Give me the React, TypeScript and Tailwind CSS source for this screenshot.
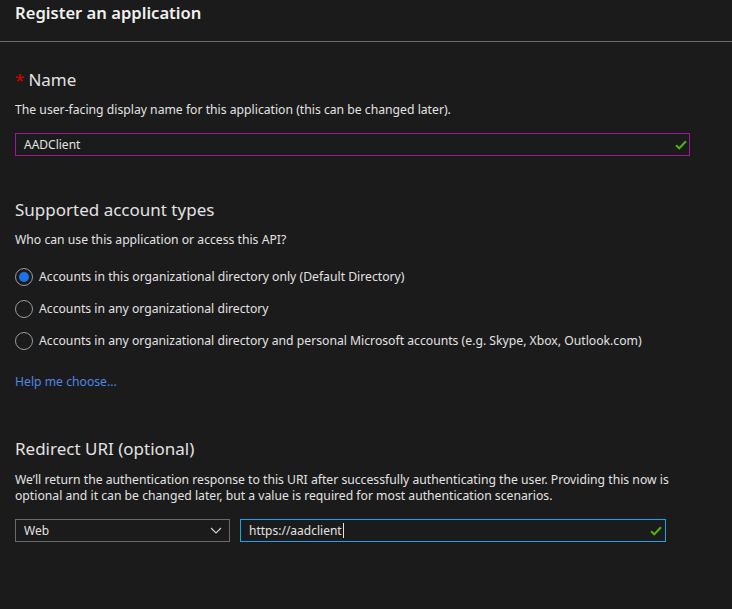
import React from "react";

const Check = () => (
  <svg width="12" height="10" viewBox="0 0 12 10" className="shrink-0">
    <path d="M1 5.2 L4.3 8.3 L11 1.3" fill="none" stroke="#57b00f" strokeWidth="2" />
  </svg>
);

const Radio = ({ checked, label }: { checked?: boolean; label: string }) => (
  <div className="flex h-[32px] items-center">
    <div className="flex h-[18px] w-[18px] items-center justify-center rounded-full border border-[#9a9a9a]">
      {checked && <div className="h-[10px] w-[10px] rounded-full bg-[#1a73e8]" />}
    </div>
    <span className="ml-[6px] text-[12.2px] text-[#e2e2e2]">{label}</span>
  </div>
);

export default function App() {
  return (
    <div
      className="min-h-[609px] w-full bg-[#1b1b1b] text-[#e2e2e2]"
      style={{ fontFamily: '"Noto Sans", "Open Sans", sans-serif' }}
    >
      <div className="h-[42px] border-b border-[#6e6e6e] px-[15px]">
        <div className="text-[16.6px] font-semibold leading-[26px] text-[#f0f0f0]">Register an application</div>
      </div>
      <div className="px-[15px]">
        <div className="mt-[26px] flex h-[24px] items-center text-[17px] leading-[24px]">
          <span className="mr-[4px] text-[#e00000]">*</span>
          <span>Name</span>
        </div>
        <div className="mt-[9px] h-[18px] text-[12.2px] leading-[18px]">
          The user-facing display name for this application (this can be changed later).
        </div>
        <div className="mt-[14px] flex h-[23px] w-[675px] items-center justify-between border border-[#9a1a9a] pl-[8px] pr-[2px]">
          <span className="text-[12px]">AADClient</span>
          <Check />
        </div>

        <div className="mt-[42px] h-[24px] text-[17px] leading-[24px]">Supported account types</div>
        <div className="mt-[9px] h-[18px] text-[12.2px] leading-[18px]">
          Who can use this application or access this API?
        </div>
        <div className="mt-[12px]">
          <Radio checked label="Accounts in this organizational directory only (Default Directory)" />
          <Radio label="Accounts in any organizational directory" />
          <Radio label="Accounts in any organizational directory and personal Microsoft accounts (e.g. Skype, Xbox, Outlook.com)" />
        </div>
        <div className="mt-[16px] h-[18px] text-[12.2px] leading-[18px] text-[#4f86e8]">Help me choose...</div>

        <div className="mt-[46px] h-[24px] text-[17px] leading-[24px]">Redirect URI (optional)</div>
        <div className="mt-[11px] text-[12.2px] leading-[16px]">
          We’ll return the authentication response to this URI after successfully authenticating the user. Providing this now is
          <br />
          optional and it can be changed later, but a value is required for most authentication scenarios.
        </div>
        <div className="mt-[15px] flex gap-[10px]">
          <div className="flex h-[23px] w-[215px] items-center justify-between border border-[#6a6a6a] pl-[8px] pr-[7px]">
            <span className="text-[12px]">Web</span>
            <svg width="12" height="7" viewBox="0 0 12 7">
              <path d="M1 1 L6 6 L11 1" fill="none" stroke="#d0d0d0" strokeWidth="1.2" />
            </svg>
          </div>
          <div className="flex h-[23px] w-[426px] items-center justify-between border border-[#12a4ee] pl-[8px] pr-[3px]">
            <span className="flex items-center text-[12px]">
              https://aadclient
              <span className="ml-[1px] inline-block h-[15px] w-[1px] bg-[#e2e2e2]" />
            </span>
            <Check />
          </div>
        </div>
      </div>
    </div>
  );
}
